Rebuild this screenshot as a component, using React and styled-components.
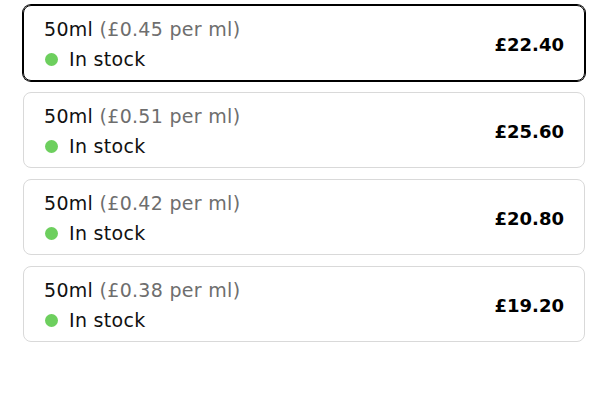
import React from "react";
import styled, { createGlobalStyle } from "styled-components";

const Global = createGlobalStyle`
  html, body { margin: 0; padding: 0; background: #fff; }
  body { font-family: "DejaVu Sans", "Liberation Sans", sans-serif; }
`;

const List = styled.div`
  display: flex;
  flex-direction: column;
  gap: 11px;
  padding: 5px 24px 0 23px;
`;

const Card = styled.div`
  display: flex;
  align-items: center;
  justify-content: space-between;
  height: 76px;
  box-sizing: border-box;
  padding: 0 20px;
  border-radius: 8px;
  border: 1px solid ${(p) => (p.$selected ? "#000" : "#d9d9d9")};
  box-shadow: ${(p) => (p.$selected ? "0 0 0 1px #000" : "none")};
`;

const Info = styled.div`
  display: flex;
  flex-direction: column;
  gap: 4px;
  margin-top: 2px;
`;

const Size = styled.div`
  font-size: 19px;
  line-height: 26px;
  letter-spacing: 0.3px;
  color: #111;
`;

const PerMl = styled.span`
  color: #6e6e6e;
`;

const Stock = styled.div`
  display: flex;
  align-items: center;
  gap: 11px;
  font-size: 19px;
  line-height: 26px;
  letter-spacing: 0.3px;
  color: #111;
`;

const Dot = styled.span`
  width: 13px;
  height: 13px;
  border-radius: 50%;
  background: #6dcf5e;
  margin-left: 1px;
`;

const Price = styled.div`
  font-size: 18px;
  font-weight: 700;
  color: #000;
  margin-top: 2px;
`;

const items = [
  { per: "0.45", price: "22.40", selected: true },
  { per: "0.51", price: "25.60" },
  { per: "0.42", price: "20.80" },
  { per: "0.38", price: "19.20" },
];

export default function App() {
  return (
    <>
      <Global />
      <List>
        {items.map((it) => (
          <Card key={it.per} $selected={it.selected}>
            <Info>
              <Size>
                50ml <PerMl>(£{it.per} per ml)</PerMl>
              </Size>
              <Stock>
                <Dot />
                In stock
              </Stock>
            </Info>
            <Price>£{it.price}</Price>
          </Card>
        ))}
      </List>
    </>
  );
}
